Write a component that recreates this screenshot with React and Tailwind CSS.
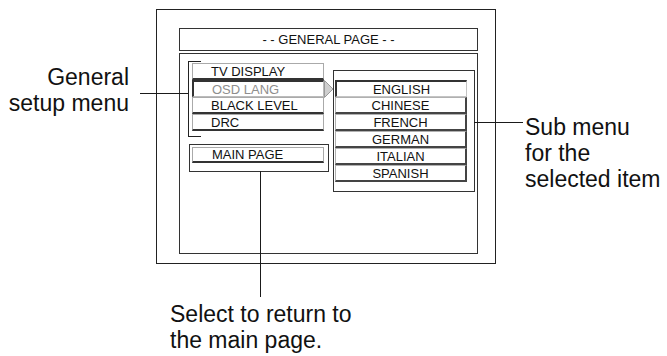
import React from "react";

const font = { fontFamily: '"Liberation Sans", Arial, Helvetica, sans-serif' };

function LeftItem({ label, selected }) {
  return (
    <div
      className={
        "h-[17px] w-[132px] flex items-center pl-[18px] text-[13px] leading-[15px] border " +
        (selected
          ? "border-t-[2px] border-l-[2px] border-t-[#333] border-l-[#333] border-r-[#bbb] border-b-[#bbb] text-[#8e8e8e] pl-[17px]"
          : "border-[#aaa] border-b-[2px] border-b-[#333] text-[#111]")
      }
    >
      {label}
    </div>
  );
}

function SubItem({ label, selected }) {
  return (
    <div
      className={
        "h-[17px] w-[132px] flex items-center justify-center text-[13px] leading-[15px] text-[#111] border " +
        (selected
          ? "border-t-[2px] border-l-[2px] border-t-[#333] border-l-[#333] border-r-[#c4c4c4] border-b-[#c4c4c4]"
          : "border-t-[#b0b0b0] border-l-[#b0b0b0] border-r-[2px] border-b-[2px] border-r-[#444] border-b-[#444]")
      }
    >
      {label}
    </div>
  );
}

export default function App() {
  return (
    <div className="relative w-[667px] h-[356px] bg-white overflow-hidden text-[#111]" style={font}>
      <div className="flex items-start">
        {/* left label */}
        <div className="w-[156px] pr-[27px] mt-[64px] text-right text-[23px] leading-[26px]">
          General
          <br />
          setup menu
        </div>

        {/* screen box */}
        <div className="mt-[9px] w-[340px] h-[255px] border border-[#222] pl-[22px] pt-[18px]">
          <div className="w-[299px] h-[23px] border border-[#333] flex items-center justify-center text-[13px] leading-[15px]">
            - - GENERAL PAGE - -
          </div>
          <div className="mt-[2px] w-[299px] h-[201px] border border-[#333] flex items-start">
            {/* left column */}
            <div className="ml-[8px] pt-[7px] w-[141px]">
              <div className="relative pl-[4px] pt-[2px] pb-[6px]">
                <div className="absolute left-0 top-0 bottom-0 w-[13px] border-l border-t border-b border-[#222]" />
                <LeftItem label="TV DISPLAY" />
                <LeftItem label="OSD LANG" selected />
                <LeftItem label="BLACK LEVEL" />
                <LeftItem label="DRC" />
              </div>
              <div className="mt-[7px] ml-[1px] w-[140px] h-[28px] border border-[#333] pl-[2px] pt-[2px]">
                <div className="h-[16px] w-[132px] flex items-center pl-[19px] text-[13px] leading-[15px] border border-[#aaa] border-b-[2px] border-b-[#333]">
                  MAIN PAGE
                </div>
              </div>
            </div>

            {/* sub menu */}
            <div className="relative mt-[16px] ml-[4px] w-[142px] h-[122px] border border-[#333] pl-[1px] pt-[9px]">
              <svg className="absolute left-[-10px] top-[9px]" width="10" height="18" viewBox="0 0 10 18">
                <polygon points="0.5,0.5 9,9 0.5,17.5" fill="#cfcfcf" stroke="#9a9a9a" strokeWidth="1" />
              </svg>
              <SubItem label="ENGLISH" selected />
              <SubItem label="CHINESE" />
              <SubItem label="FRENCH" />
              <SubItem label="GERMAN" />
              <SubItem label="ITALIAN" />
              <SubItem label="SPANISH" />
            </div>
          </div>
        </div>

        {/* right label */}
        <div className="pl-[29px] mt-[114px] text-[23px] leading-[26px] whitespace-nowrap">
          Sub menu
          <br />
          for the
          <br />
          selected item
        </div>
      </div>

      {/* bottom label */}
      <div className="pl-[170px] mt-[37px] text-[23px] leading-[26px]">
        Select to return to
        <br />
        the main page.
      </div>

      {/* leader lines */}
      <div className="absolute left-[140px] top-[93px] w-[48px] h-px bg-[#1a1a1a]" />
      <div className="absolute left-[474px] top-[122px] w-[49px] h-px bg-[#1a1a1a]" />
      <div className="absolute left-[260px] top-[171px] w-px h-[126px] bg-[#1a1a1a]" />
    </div>
  );
}
